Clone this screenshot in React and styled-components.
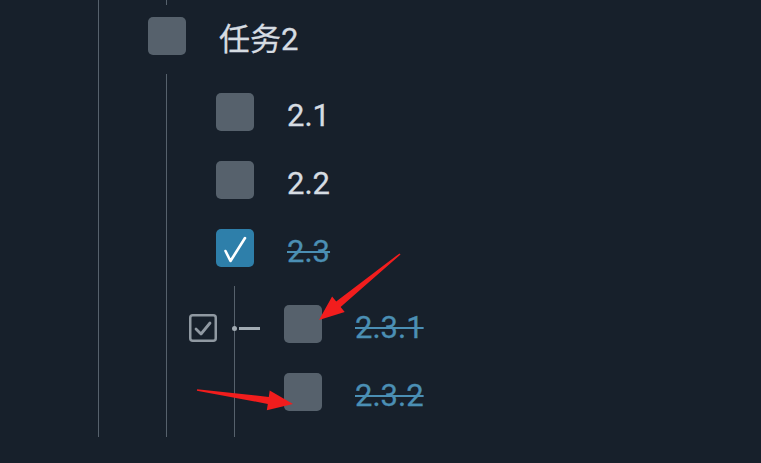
import styled, { createGlobalStyle } from "styled-components";

const GlobalStyle = createGlobalStyle`
  html, body {
    margin: 0;
    padding: 0;
    background: #17202b;
  }
  body {
    font-family: Roboto, "Noto Sans CJK SC", sans-serif;
  }
`;

const Page = styled.div`
  position: relative;
  width: 761px;
  height: 463px;
  overflow: hidden;
  background: #17202b;
  padding-left: 98px;
  box-sizing: border-box;
`;

const Tree = styled.div`
  display: flex;
  flex-direction: column;
  border-left: 1px solid #56616c;
  padding-left: 49px;
  height: 437px;
  box-sizing: border-box;
`;

const Stub = styled.div`
  margin-left: 18px;
  height: 5px;
  border-left: 1px solid #56616c;
  margin-bottom: 12px;
`;

const Item = styled.div`
  display: flex;
  flex-direction: column;
  flex: ${({ $grow }) => ($grow ? 1 : "none")};
`;

const Children = styled.div`
  display: flex;
  flex-direction: column;
  gap: 30px;
  margin-left: 18px;
  margin-top: 19px;
  padding-top: 19px;
  padding-left: 49px;
  padding-bottom: ${({ $tail }) => $tail || 0}px;
  border-left: 1px solid #56616c;
  flex: 1;
`;

const Row = styled.div`
  position: relative;
  display: flex;
  align-items: center;
  height: 38px;
`;

const Box = styled.div`
  flex: none;
  width: 38px;
  height: 38px;
  border-radius: 5px;
  background: ${({ $checked }) => ($checked ? "#2e7faa" : "#56616c")};
  display: flex;
  align-items: center;
  justify-content: center;
`;

const Label = styled.span`
  margin-left: 33px;
  font-size: 31px;
  line-height: 38px;
  padding-top: 8px;
  color: ${({ $done }) => ($done ? "#4b8fb4" : "#d6dce2")};
  text-decoration: ${({ $done }) => ($done ? "line-through" : "none")};
  text-decoration-thickness: 2px;
  -webkit-text-stroke: 0.3px currentColor;
  white-space: nowrap;
`;

const Tools = styled.div`
  position: absolute;
  left: -95px;
  top: 9px;
  display: flex;
  align-items: center;
`;

const ToggleIcon = styled.svg`
  display: block;
`;

const Dot = styled.span`
  width: 5px;
  height: 5px;
  border-radius: 50%;
  background: #a2abb3;
  margin-left: 15px;
`;

const Dash = styled.span`
  width: 21px;
  height: 3px;
  background: #a2abb3;
  margin-left: 2px;
`;

const Overlay = styled.svg`
  position: absolute;
  left: 0;
  top: 0;
  pointer-events: none;
`;

const Check = () => (
  <svg width="38" height="38" viewBox="0 0 38 38">
    <path
      d="M9.5 22 L14.5 32 L29 9"
      fill="none"
      stroke="#ffffff"
      strokeWidth="2.6"
      strokeLinecap="round"
      strokeLinejoin="round"
    />
  </svg>
);

const Task = ({ label, done, checked, tools }) => (
  <Row>
    {tools && (
      <Tools>
        <ToggleIcon width="28" height="28" viewBox="0 0 28 28">
          <rect x="1.25" y="1.25" width="25.5" height="25.5" rx="2.5" fill="none" stroke="#9099a2" strokeWidth="2.5" />
          <path d="M7 15 L12 20 L21 9" fill="none" stroke="#9099a2" strokeWidth="2.8" strokeLinecap="round" strokeLinejoin="round" />
        </ToggleIcon>
        <Dot />
        <Dash />
      </Tools>
    )}
    <Box $checked={checked}>{checked && <Check />}</Box>
    <Label $done={done}>{label}</Label>
  </Row>
);

const arrowPoints = ([tx, ty], [px, py]) => {
  const dx = px - tx;
  const dy = py - ty;
  const len = Math.hypot(dx, dy);
  const ux = dx / len;
  const uy = dy / len;
  const nx = -uy;
  const ny = ux;
  const bx = px - ux * 25;
  const by = py - uy * 25;
  const pts = [
    [tx + nx * 0.8, ty + ny * 0.8],
    [bx + nx * 3.5, by + ny * 3.5],
    [bx + nx * 10, by + ny * 10],
    [px, py],
    [bx - nx * 10, by - ny * 10],
    [bx - nx * 3.5, by - ny * 3.5],
    [tx - nx * 0.8, ty - ny * 0.8],
  ];
  return pts.map((p) => p.map((v) => v.toFixed(1)).join(",")).join(" ");
};

export default function App() {
  return (
    <>
      <GlobalStyle />
      <Page>
        <Tree>
          <Stub />
          <Item $grow>
            <Task label="任务2" />
            <Children>
              <Task label="2.1" />
              <Task label="2.2" />
              <Item $grow>
                <Task label="2.3" checked done />
                <Children $tail={26}>
                  <Task label="2.3.1" done tools />
                  <Task label="2.3.2" done />
                </Children>
              </Item>
            </Children>
          </Item>
        </Tree>
        <Overlay width="761" height="463" viewBox="0 0 761 463">
          <polygon points={arrowPoints([400, 254], [319, 320])} fill="#f21d1d" />
          <polygon points={arrowPoints([197, 390], [293, 404])} fill="#f21d1d" />
        </Overlay>
      </Page>
    </>
  );
}
